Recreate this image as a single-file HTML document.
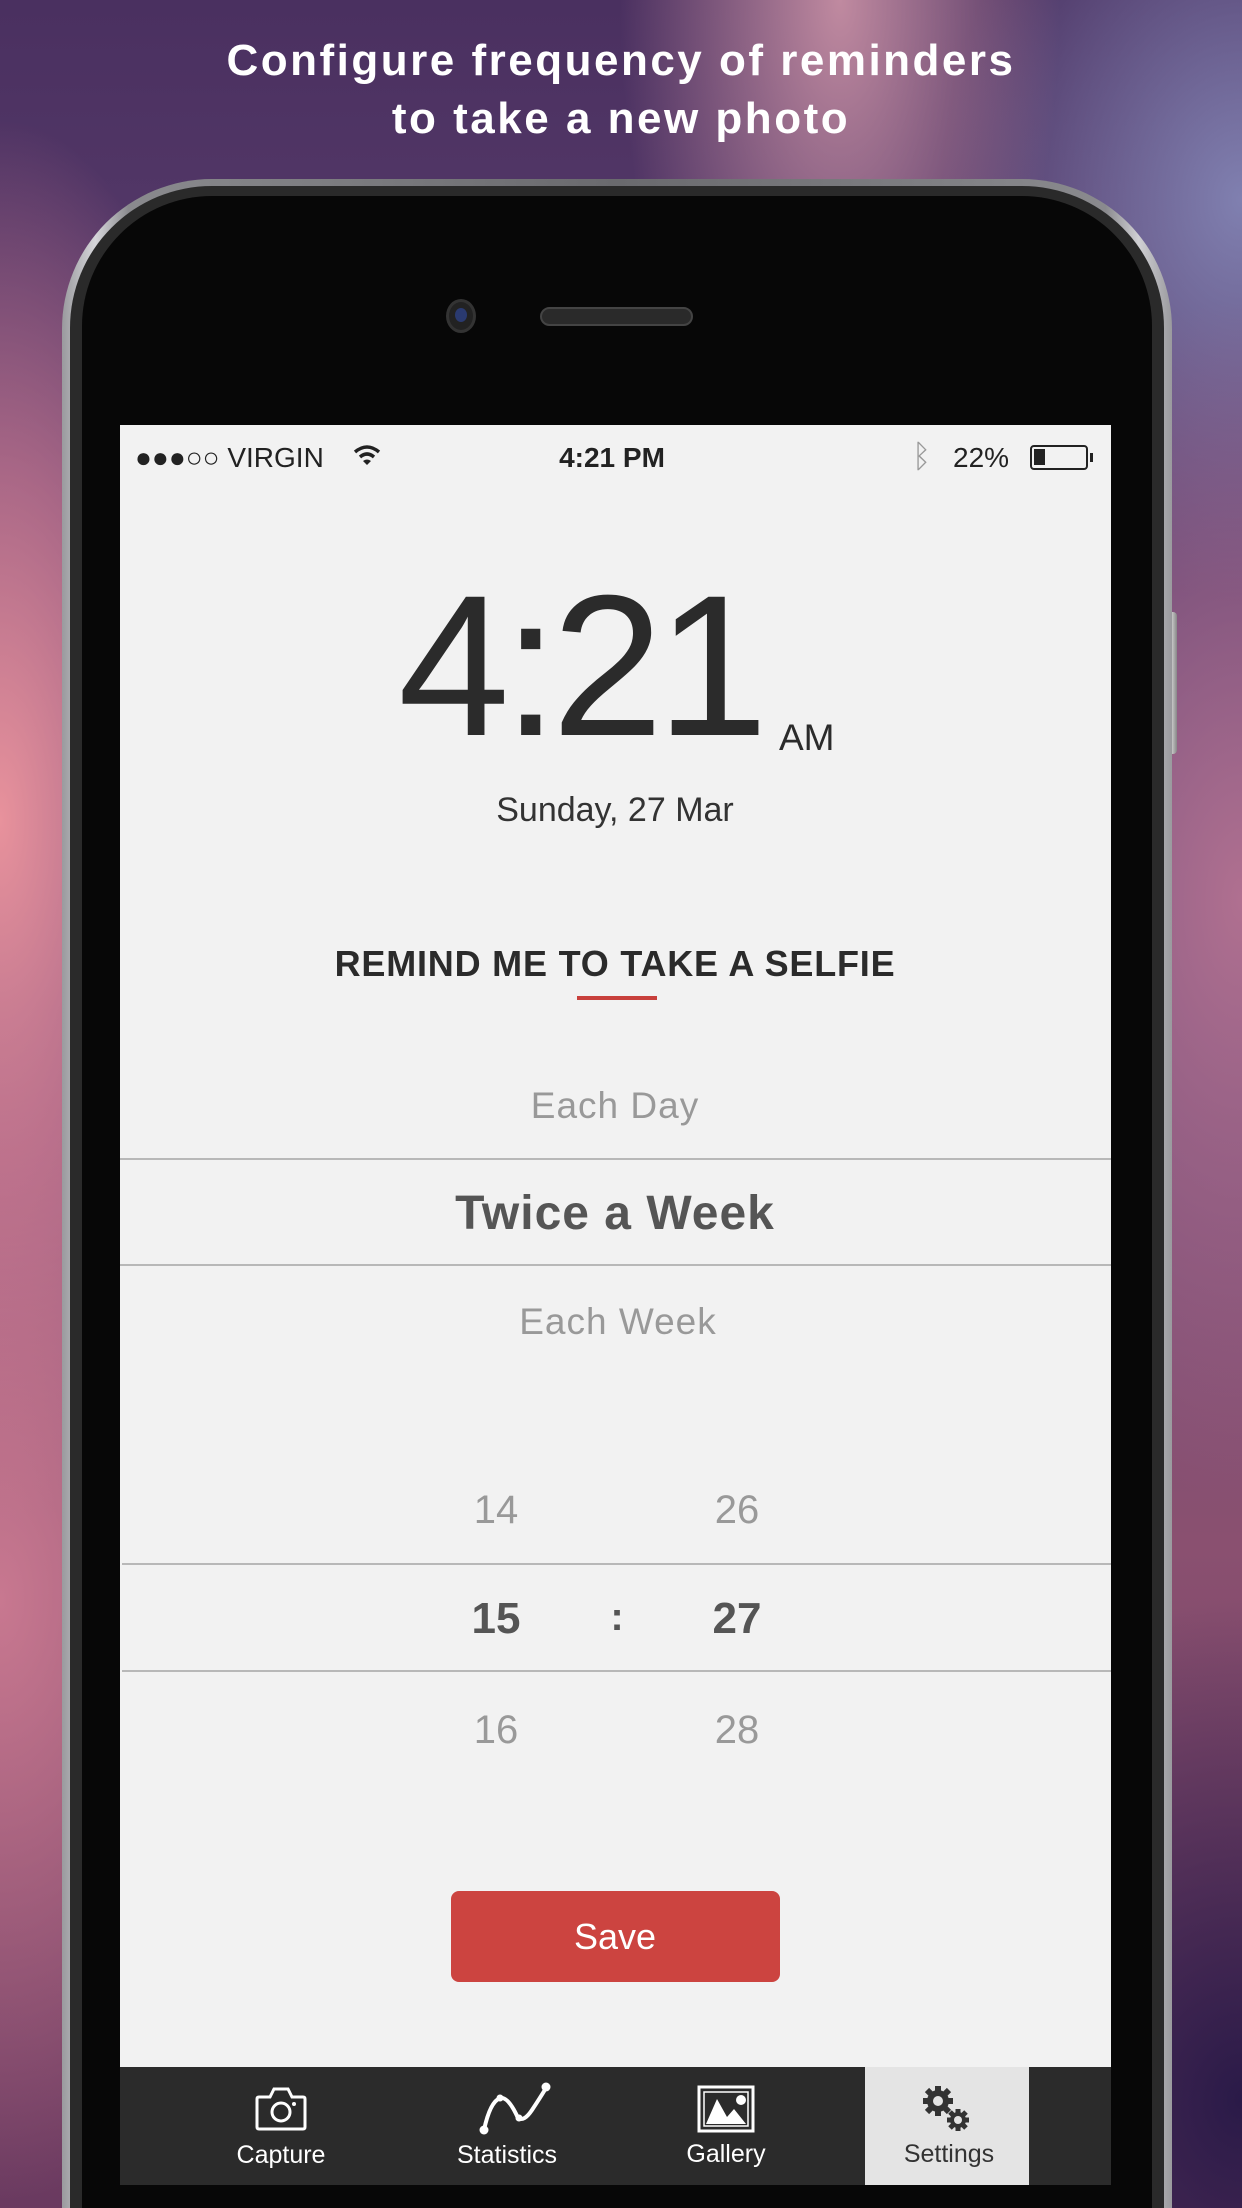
<!DOCTYPE html>
<html style="width:1242px;height:2208px;overflow:hidden"><head><meta charset="utf-8">
<style>
*{margin:0;padding:0;box-sizing:border-box}
body{width:1242px;height:2208px;overflow:hidden;position:relative;font-family:"Liberation Sans",sans-serif;}
#wrap{position:absolute;left:0;top:0;width:1242px;height:2208px;overflow:hidden;
background:
radial-gradient(ellipse 260px 700px at 0px 820px,#e8929c 0%,rgba(220,130,150,.6) 50%,rgba(0,0,0,0) 100%),
radial-gradient(ellipse 220px 500px at 840px 0px,#c08aa0 0%,rgba(0,0,0,0) 100%),
radial-gradient(ellipse 300px 600px at 1242px 900px,#b07090 0%,rgba(0,0,0,0) 100%),
radial-gradient(ellipse 300px 400px at 1242px 200px,#8080b0 0%,rgba(0,0,0,0) 100%),
radial-gradient(ellipse 300px 600px at 0px 1600px,#c87890 0%,rgba(0,0,0,0) 100%),
radial-gradient(ellipse 400px 500px at 1242px 2100px,#2a1a48 0%,rgba(0,0,0,0) 100%),
linear-gradient(180deg,#4a3060 0%,#6a4a7a 40%,#8a5070 70%,#6a3a60 100%);}
.t{position:absolute;white-space:nowrap;line-height:1}
.c{transform:translateX(-50%)}
</style></head><body><div id="wrap">
<div class="t c" style="left:621px;top:39px;color:#fff;font-size:44px;font-weight:bold;letter-spacing:2.5px">Configure frequency of reminders</div>
<div class="t c" style="left:621px;top:97px;color:#fff;font-size:44px;font-weight:bold;letter-spacing:2.5px">to take a new photo</div>

<div style="position:absolute;left:1166px;top:612px;width:11px;height:142px;border-radius:4px;background:linear-gradient(90deg,#777,#ccc,#888)"></div>
<div style="position:absolute;left:62px;top:179px;width:1110px;height:2029px;border-radius:150px 150px 0 0;background:linear-gradient(90deg,#9a9a9e,#d6d6da 3%,#8a8a8e 6%,#6a6a6e 50%,#8a8a8e 94%,#d0d0d4 97%,#9a9a9e)"></div>
<div style="position:absolute;left:70px;top:186px;width:1094px;height:2022px;border-radius:142px 142px 0 0;background:#2a2a2a"></div>
<div style="position:absolute;left:82px;top:196px;width:1070px;height:2012px;border-radius:130px 130px 0 0;background:#070707"></div>
<div style="position:absolute;left:446px;top:299px;width:30px;height:34px;border-radius:50%;background:#222;border:3px solid #333"></div>
<div style="position:absolute;left:455px;top:308px;width:12px;height:14px;border-radius:50%;background:#2a3a70"></div>
<div style="position:absolute;left:540px;top:307px;width:153px;height:19px;border-radius:10px;background:#2a2a2a;border:2px solid #444"></div>

<div style="position:absolute;left:120px;top:425px;width:991px;height:1760px;background:#f2f2f2"></div>
<div class="t" style="left:135px;top:444px;font-size:28px;color:#222">●●●○○ VIRGIN</div>
<svg style="position:absolute;left:352px;top:443px" width="30" height="26" viewBox="0 0 30 26"><path d="M3 9 Q15 -1 27 9" stroke="#222" stroke-width="3.5" fill="none"/><path d="M8 14 Q15 8 22 14" stroke="#222" stroke-width="3.5" fill="none"/><path d="M15 22 L11 18 Q15 15 19 18 Z" fill="#222"/></svg>
<div class="t c" style="left:612px;top:444px;font-size:28px;color:#222;font-weight:bold">4:21 PM</div>
<div class="t" style="left:912px;top:440px;font-size:32px;color:#999">ᛒ</div>
<div class="t" style="left:953px;top:444px;font-size:28px;color:#222">22%</div>
<div style="position:absolute;left:1030px;top:445px;width:58px;height:25px;border:2.5px solid #222;border-radius:4px"><div style="position:absolute;left:2px;top:2px;width:11px;height:16px;background:#222"></div></div>
<div style="position:absolute;left:1090px;top:453px;width:3px;height:9px;background:#222"></div>

<div class="t" style="left:398px;top:565px;font-size:201px;color:#2b2b2b;letter-spacing:-7px">4:21</div>
<div class="t" style="left:779px;top:719px;font-size:37px;color:#2b2b2b">AM</div>
<div class="t c" style="left:615px;top:793px;font-size:34px;color:#333">Sunday, 27 Mar</div>

<div class="t c" style="left:615px;top:946px;font-size:36px;color:#2b2b2b;font-weight:bold;letter-spacing:0.8px">REMIND ME TO TAKE A SELFIE</div>
<div style="position:absolute;left:577px;top:996px;width:80px;height:4px;background:#c8403c"></div>

<div class="t c" style="left:615px;top:1087px;font-size:37px;color:#999;letter-spacing:1px">Each Day</div>
<div style="position:absolute;left:120px;top:1158px;width:991px;height:2px;background:#b8b8b8"></div>
<div class="t c" style="left:615px;top:1190px;font-size:48px;color:#555;font-weight:bold;letter-spacing:1px">Twice a Week</div>
<div style="position:absolute;left:120px;top:1264px;width:991px;height:2px;background:#b8b8b8"></div>
<div class="t c" style="left:618px;top:1303px;font-size:37px;color:#999;letter-spacing:1px">Each Week</div>

<div class="t c" style="left:496px;top:1490px;font-size:40px;color:#999">14</div>
<div class="t c" style="left:737px;top:1490px;font-size:40px;color:#999">26</div>
<div style="position:absolute;left:122px;top:1563px;width:989px;height:2px;background:#b8b8b8"></div>
<div class="t c" style="left:496px;top:1597px;font-size:44px;color:#555;font-weight:bold">15</div>
<div class="t c" style="left:617px;top:1597px;font-size:40px;color:#555;font-weight:bold">:</div>
<div class="t c" style="left:737px;top:1597px;font-size:44px;color:#555;font-weight:bold">27</div>
<div style="position:absolute;left:122px;top:1670px;width:989px;height:2px;background:#b8b8b8"></div>
<div class="t c" style="left:496px;top:1710px;font-size:40px;color:#999">16</div>
<div class="t c" style="left:737px;top:1710px;font-size:40px;color:#999">28</div>

<div style="position:absolute;left:451px;top:1891px;width:329px;height:91px;border-radius:8px;background:#cc4440"></div>
<div class="t c" style="left:615px;top:1919px;font-size:36px;color:#fff">Save</div>

<div style="position:absolute;left:120px;top:2067px;width:991px;height:118px;background:#2b2b2b"></div>
<div style="position:absolute;left:865px;top:2067px;width:164px;height:118px;background:#e4e4e4"></div>
<svg style="position:absolute;left:254px;top:2085px" width="54" height="46" viewBox="0 0 54 46"><path d="M5 12 H16 L20 4 H34 L38 12 H49 Q51 12 51 14 V42 Q51 44 49 44 H5 Q3 44 3 42 V14 Q3 12 5 12Z" fill="none" stroke="#fff" stroke-width="3"/><circle cx="27" cy="27" r="9" fill="none" stroke="#fff" stroke-width="3"/><circle cx="40" cy="19" r="2" fill="#fff"/></svg>
<div class="t c" style="left:281px;top:2143px;font-size:25px;color:#fff">Capture</div>
<svg style="position:absolute;left:478px;top:2080px" width="76" height="56" viewBox="0 0 76 56"><path d="M6 50 Q12 22 22 18 Q30 16 40 38 Q46 42 54 30 Q62 18 68 8" fill="none" stroke="#fff" stroke-width="4"/><circle cx="6" cy="50" r="4.5" fill="#fff"/><circle cx="22" cy="18" r="3.5" fill="#fff"/><circle cx="41" cy="38" r="3.5" fill="#fff"/><circle cx="68" cy="7" r="4.5" fill="#fff"/></svg>
<div class="t c" style="left:507px;top:2143px;font-size:25px;color:#fff">Statistics</div>
<svg style="position:absolute;left:697px;top:2085px" width="58" height="48" viewBox="0 0 58 48"><rect x="2" y="2" width="54" height="44" fill="none" stroke="#fff" stroke-width="3"/><rect x="7" y="7" width="44" height="34" fill="none" stroke="#fff" stroke-width="1.5"/><path d="M9 39 L20 14 L30 32 L37 24 L49 39Z" fill="#fff"/><circle cx="44" cy="15" r="5" fill="#fff"/></svg>
<div class="t c" style="left:726px;top:2142px;font-size:25px;color:#fff">Gallery</div>
<svg style="position:absolute;left:920px;top:2083px" width="54" height="52" viewBox="0 0 54 52"><g fill="#333"><circle cx="18" cy="18" r="11"/><g stroke="#333" stroke-width="6"><path d="M18 3V33M3 18H33M7 7L29 29M29 7L7 29"/></g><circle cx="38" cy="37" r="8"/><g stroke="#333" stroke-width="5"><path d="M38 26V48M27 37H49M30 29L46 45M46 29L30 45"/></g></g><circle cx="18" cy="18" r="5" fill="#e4e4e4"/><circle cx="38" cy="37" r="4" fill="#e4e4e4"/></svg>
<div class="t c" style="left:949px;top:2142px;font-size:25px;color:#333">Settings</div>
</div></body></html>
